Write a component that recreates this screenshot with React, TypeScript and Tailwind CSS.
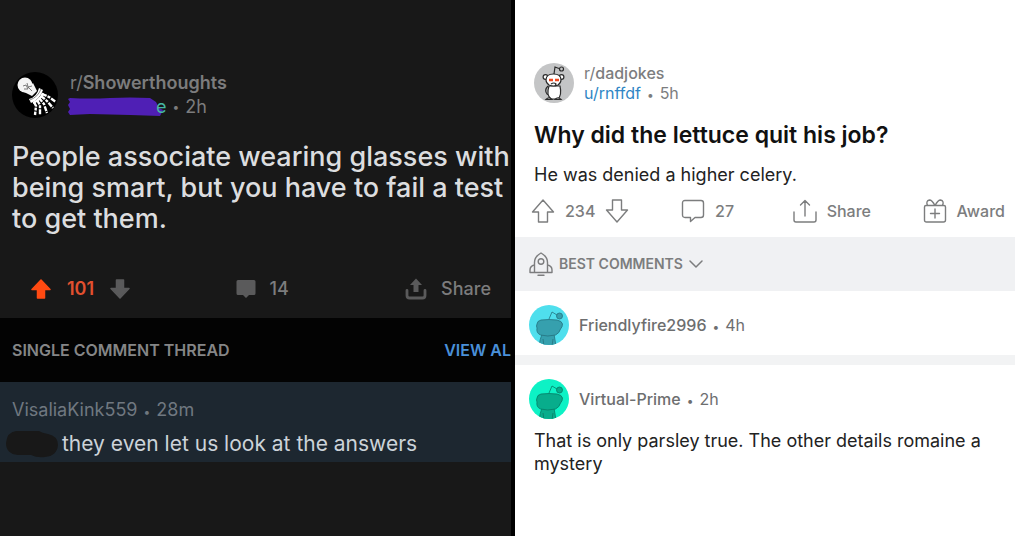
import type { ReactNode } from "react";
import { clsx } from "clsx";

interface IconProps {
  className?: string;
}

function BulbAvatar() {
  return (
    <svg viewBox="0 0 46 46" className="size-[46px] shrink-0" aria-hidden="true">
      <circle cx="23" cy="23" r="23" fill="#000" />
      <circle cx="13" cy="13" r="7.5" fill="#f4f4f4" />
      <path d="M12 20l9-9 4 8-5 5z" fill="#f4f4f4" />
      <path d="M11 14l3-1 2 4M15 11l1 4 4-1M16 15l4 4M12 17l4 0" stroke="#5a5a5a" strokeWidth="0.8" fill="none" />
      <path d="M17 27q8-2 10-11l4 2q-3 9-12 13z" fill="#fff" />
      <path d="M18 28q8-3 11-11" stroke="#555" strokeWidth="0.7" fill="none" />
      <path d="M22 30l2 4-1 9M25 28l3 5 0 10M27 26l5 6 3 9M29 24l6 5 6 7M30 22l7 3 7 5" stroke="#fff" strokeWidth="2.4" strokeDasharray="5 1 3 1.2" fill="none" />
      <path d="M21 31q7-3 10-10" stroke="#fff" strokeWidth="2.2" fill="none" />
    </svg>
  );
}

function BearAvatar() {
  return (
    <svg viewBox="0 0 40 40" className="size-10 shrink-0" aria-hidden="true">
      <circle cx="20" cy="20" r="20" fill="#c4c5c6" />
      <g stroke="#2b2b2b" strokeWidth="1.2" fill="#fff">
        <path d="M20 11l1-7 4 1.5" fill="none" />
        <circle cx="27.5" cy="6" r="2" fill="#c4c5c6" />
        <circle cx="11.5" cy="14" r="2.4" />
        <circle cx="27.5" cy="14" r="2.4" />
        <path d="M14 23q-4 4-1 8l2 1" fill="none" />
        <path d="M15 23q-3 9 2 13h7q4-4 2-13z" />
        <path d="M12 17q0-6 7.500-6T27 17q0 3-3 5-4 2-9 0-3-2-3-5z" />
        <path d="M12 36.500q3-3 6 0zM21 36.500q3-3 6 0z" />
        <path d="M17 21q3-2 5 0l-1 2" fill="none" />
      </g>
      <path d="M15 17h4M21 17h4" stroke="#f04b23" strokeWidth="2.4" />
    </svg>
  );
}

interface SnooAvatarProps {
  background: string;
  body: string;
  line: string;
}

function SnooAvatar({ background, body, line }: SnooAvatarProps) {
  const clipId = `clip-${body.slice(1)}`;
  return (
    <svg viewBox="0 0 40 40" className="size-10 shrink-0" aria-hidden="true">
      <clipPath id={clipId}>
        <circle cx="20" cy="20" r="20" />
      </clipPath>
      <g clipPath={`url(#${clipId})`}>
        <rect width="40" height="40" fill={background} />
        <g fill={body} stroke={line} strokeWidth="0.8">
          <path d="M13 29h12q1 6 2 12H10q1-7 3-12z" />
          <path d="M14 34l1 7M24 34l-1 7" fill="none" />
          <path d="M8 19q0-3 4-4 8-1 16 0 5 1 5.500 4 0 3-2 5-1 4-5 6-8 2-15 0Q7 28 8 23q-1-2 0-4z" />
          <path d="M20 14l3-7 5 3" fill="none" />
          <circle cx="30.5" cy="11" r="3" />
        </g>
      </g>
    </svg>
  );
}

function SolidArrow({ className }: IconProps) {
  return (
    <svg viewBox="0 0 20 20" className={clsx("size-5", className)} fill="currentColor" stroke="currentColor" strokeWidth="1.5" strokeLinejoin="round" aria-hidden="true">
      <path d="M10 1L1 10.5h5.500V19h7v-8.500H19z" />
    </svg>
  );
}

function SolidComment() {
  return (
    <svg viewBox="0 0 20 20" className="size-5" fill="currentColor" aria-hidden="true">
      <path d="M2 1h16q1.500 0 1.500 1.500v12Q19.500 16 18 16h-5l-3 3-3-3H2Q.5 16 .5 14.500v-12Q.5 1 2 1z" />
    </svg>
  );
}

function SolidShare() {
  return (
    <svg viewBox="0 0 22 22" className="size-[22px]" aria-hidden="true">
      <path d="M2 12.500v5Q2 20 4.500 20h13q2.500 0 2.500-2.500v-5" fill="none" stroke="currentColor" strokeWidth="2.8" strokeLinecap="round" />
      <path d="M11 .5L5 7h3.500v7h5V7H17z" fill="currentColor" />
    </svg>
  );
}

function OutlineIcon({ children, className }: { children: ReactNode; className?: string }) {
  return (
    <svg
      viewBox="0 0 24 24"
      className={clsx("size-6 shrink-0", className)}
      fill="none"
      stroke="currentColor"
      strokeWidth="1.4"
      strokeLinecap="round"
      strokeLinejoin="round"
      aria-hidden="true"
    >
      {children}
    </svg>
  );
}

function OutlineArrow({ className }: IconProps) {
  return (
    <OutlineIcon className={className}>
      <path d="M12 1L1.500 13H7.500v10h9V13h6z" />
    </OutlineIcon>
  );
}

function Age({ children }: { children: ReactNode }) {
  return (
    <>
      <span className="mx-1.5 text-xs leading-none">•</span>
      {children}
    </>
  );
}

function ShowerPost() {
  return (
    <section className="min-w-0 overflow-hidden border-r-4 border-black bg-[#181818] pt-[71px]">
      <header className="flex items-center gap-3 px-3">
        <BulbAvatar />
        <div className="text-lg leading-6 text-[#7c7c7d]">
          <p>
            r/<span className="font-semibold">Showerthoughts</span>
          </p>
          <p className="flex items-center">
            <svg viewBox="0 0 96 20" className="-ml-0.5 h-5 w-24" aria-hidden="true">
              <path d="M2 1q20 1 40 0t40 0l6 4 3 6 4 2-3 6-30-1-40-1-20 1-2-3 2-3-2-4 2-3-2-3z" fill="#4f1fb5" />
            </svg>
            <span className="-ml-2 text-[#45b8a5]">e</span>
            <Age>2h</Age>
          </p>
        </div>
      </header>

      <h2 className="mt-[22px] pl-3 text-[27px] leading-[31px] font-medium text-[#dcdddf]">
        People associate wearing glasses with being smart, but you have to fail a test to get them.
      </h2>

      <div className="mt-8 flex h-[46px] items-center justify-between pr-5 pl-[31px] text-lg font-medium text-[#7c7c7d]">
        <div className="flex items-center gap-4">
          <button type="button" aria-label="Upvote" className="text-[#ff4a12]">
            <SolidArrow />
          </button>
          <span className="font-semibold text-[#e2502f]">101</span>
          <button type="button" aria-label="Downvote" className="text-[#5a5a5b]">
            <SolidArrow className="rotate-180" />
          </button>
        </div>
        <button type="button" className="flex w-16 items-center gap-3.5">
          <span className="text-[#5a5a5b]">
            <SolidComment />
          </span>
          14
        </button>
        <button type="button" className="flex items-center gap-3.5">
          <span className="text-[#5a5a5b]">
            <SolidShare />
          </span>
          Share
        </button>
      </div>

      <div className="mt-1.5 flex h-16 items-center justify-between bg-[#030303] pl-3 text-base font-semibold">
        <h3 className="text-[#858687]">SINGLE COMMENT THREAD</h3>
        <a href="#all" className="text-[#4a90d9]">
          VIEW AL
        </a>
      </div>

      <article className="h-20 bg-[#1d2730] pt-4 pl-3">
        <p className="text-lg leading-6 text-[#707880]">
          VisaliaKink559
          <Age>28m</Age>
        </p>
        <p className="mt-2.5 flex items-center text-[21px] leading-6 text-[#ccd3d9]">
          <svg viewBox="0 0 52 28" className="-my-1 -ml-1.5 mr-1 h-7 w-[52px]" aria-hidden="true">
            <path d="M10 1h23q3 2 9 3 10 2 10 11-1 11-13 12-8 1-14-2H12Q0 24 0 13 1 2 10 1z" fill="#181818" />
          </svg>
          they even let us look at the answers
        </p>
      </article>
    </section>
  );
}

interface CommentHeaderProps {
  name: string;
  age: string;
  avatar: ReactNode;
}

function CommentHeader({ name, age, avatar }: CommentHeaderProps) {
  return (
    <header className="flex items-center gap-2.5 pl-3.5 text-base text-[#6d6e6f]">
      {avatar}
      <p>
        <span className="font-medium">{name}</span>
        <Age>{age}</Age>
      </p>
    </header>
  );
}

function DadJokePost() {
  return (
    <section className="min-w-0 bg-white pt-[63px] pr-[9px]">
      <header className="flex items-center gap-2.5 pl-[19px] text-base leading-5 text-[#7c7d7e]">
        <BearAvatar />
        <div>
          <p>
            r/<span className="font-medium">dadjokes</span>
          </p>
          <p>
            <a href="#rnffdf" className="text-[#2f86c5]">
              u/rnffdf
            </a>
            <Age>5h</Age>
          </p>
        </div>
      </header>

      <h2 className="mt-[18px] pl-[19px] text-[23px] leading-7 font-semibold text-[#111]">Why did the lettuce quit his job?</h2>
      <p className="mt-3.5 pl-[19px] text-lg leading-6 text-[#222]">He was denied a higher celery.</p>

      <div className="mt-3 flex h-6 items-center justify-between pr-2.5 pl-4 text-base font-medium text-[#7c7d7e]">
        <div className="flex items-center gap-2.5">
          <button type="button" aria-label="Upvote">
            <OutlineArrow />
          </button>
          <span>234</span>
          <button type="button" aria-label="Downvote">
            <OutlineArrow className="rotate-180" />
          </button>
        </div>
        <button type="button" className="flex w-15 items-center gap-2.5">
          <OutlineIcon>
            <path d="M4 1.500h16q2.500 0 2.500 2.500v12q0 2.500-2.500 2.500h-6L9.500 22.500v-4H4Q1.500 18.500 1.500 16V4Q1.500 1.500 4 1.500z" />
          </OutlineIcon>
          27
        </button>
        <button type="button" className="flex items-center gap-2.5">
          <OutlineIcon>
            <path d="M1 13v8q0 2 2 2h18q2 0 2-2v-8M12 17V1.500M7.500 6L12 1.500 16.500 6" />
          </OutlineIcon>
          Share
        </button>
        <button type="button" className="flex items-center gap-2.5">
          <OutlineIcon>
            <path d="M3 6.500h18q1.500 0 1.500 1.500v13q0 2-2 2h-17q-2 0-2-2V8q0-1.500 1.500-1.500zM12 10v9M7.500 14.500h9M12 6.500Q9 1 6.500 1 2.500 2 4.500 6.500M12 6.500Q15 1 17.500 1q4 1 2 5.500" />
          </OutlineIcon>
          Award
        </button>
      </div>

      <div className="mt-3.5 flex h-[54px] items-center bg-[#f0f1f3] pl-3.5 text-[#7c7d7e]">
        <button type="button" className="flex items-center gap-1.5 text-sm font-semibold">
          <OutlineIcon>
            <path d="M5.500 20.500V10.500q0-6 6.500-9.500 6.500 3.500 6.500 9.500v10zM5.500 13q-4.500 1-4.500 5v2.500h4.500M18.500 13q4.500 1 4.500 5v2.500h-4.500M9 23.200h6" />
            <circle cx="12" cy="9.5" r="2.8" />
          </OutlineIcon>
          BEST COMMENTS
          <svg viewBox="0 0 14 14" className="size-3.5" fill="none" stroke="currentColor" strokeWidth="1.5" strokeLinecap="round" strokeLinejoin="round" aria-hidden="true">
            <path d="M1 4l6 6 6-6" />
          </svg>
        </button>
      </div>

      <article className="border-b-10 border-[#f2f3f4] pt-3.5 pb-2.5">
        <CommentHeader name="Friendlyfire2996" age="4h" avatar={<SnooAvatar background="#4fdfed" body="#36a0ae" line="#24727f" />} />
      </article>
      <article className="pt-3.5">
        <CommentHeader name="Virtual-Prime" age="2h" avatar={<SnooAvatar background="#0df2c5" body="#08ad8c" line="#087b65" />} />
        <p className="mt-2.5 pl-[19px] text-lg leading-[23px] text-[#222]">
          That is only parsley true. The other details romaine a mystery
        </p>
      </article>
    </section>
  );
}

export default function App() {
  return (
    <main className="grid min-h-screen grid-cols-[515fr_509fr] font-[Inter,sans-serif]">
      <ShowerPost />
      <DadJokePost />
    </main>
  );
}
